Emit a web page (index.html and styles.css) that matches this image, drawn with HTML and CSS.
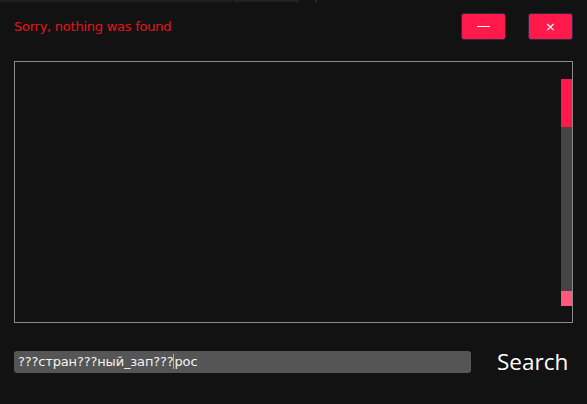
FILE: index.html
```html
<!DOCTYPE html>
<html>
<head>
<meta charset="utf-8">
<link rel="stylesheet" href="styles.css">
</head>
<body>
<div class="topstrip"><span class="seg a"></span><span class="seg b"></span><span class="seg c"></span></div>
<div class="header">
  <div class="title">Sorry, nothing was found</div>
  <div class="btns">
    <div class="btn"><span class="dash"></span></div>
    <div class="btn"><span class="x">×</span></div>
  </div>
</div>
<div class="listbox">
  <div class="scroll">
    <div class="thumb"></div>
    <div class="track"></div>
    <div class="endbtn"></div>
  </div>
</div>
<div class="footer">
  <div class="input">???стран???ный_зап???<span class="caret"></span>рос</div>
  <div class="search">Search</div>
</div>
</body>
</html>
```
FILE: styles.css
```css
html, body { margin: 0; padding: 0; }
body {
  width: 587px; height: 404px; overflow: hidden;
  background: #121212;
  font-family: "DejaVu Sans", sans-serif;
}
.topstrip { height: 3px; display: flex; }
.seg { height: 2px; background: #1f1f1f; }
.seg.a { width: 232px; }
.seg.b { width: 66px; margin-left: 1px; background: #222; }
.seg.c { width: 2px; margin-left: 16px; background: #2a2a2a; }
.header {
  display: flex; justify-content: space-between; align-items: flex-start;
  padding: 10px 14px 0 14px; height: 48px; box-sizing: border-box;
}
.title { color: #e8121e; font-size: 13px; margin-top: 6px; letter-spacing: -0.25px; }
.btns { display: flex; gap: 22px; }
.btn {
  width: 45px; height: 27px; box-sizing: border-box;
  background: #ff1a4b; border: 1px solid #2a2a48; border-radius: 3px;
  display: flex; align-items: center; justify-content: center;
}
.dash { width: 13px; height: 1px; background: #fff; }
.x { color: #fff; font-size: 13px; line-height: 1; font-family: "DejaVu Sans", sans-serif; }
.listbox {
  margin: 10px 14px 0 14px; height: 262px; box-sizing: border-box;
  border: 1px solid #8a8a8a;
  display: flex; justify-content: flex-end;
  padding: 17px 0 16px 0;
}
.scroll { width: 11px; display: flex; flex-direction: column; }
.thumb { height: 48px; background: #ff1a4b; }
.track { flex: 1; background: #454545; }
.endbtn { height: 15px; background: #ff5a7e; }
.footer {
  display: flex; align-items: center;
  padding: 0 0 0 14px; margin-top: 24px;
}
.input {
  width: 457px; height: 22px; box-sizing: border-box;
  background: #555555; border-radius: 3px;
  color: #f2f2f2; font-size: 13px; line-height: 22px; padding-left: 4px;
  font-family: "DejaVu Sans", sans-serif; letter-spacing: -0.15px;
}
.caret { display: inline-block; width: 1px; height: 15px; background: #d8b040; vertical-align: -3px; }
.search {
  margin-left: 26px; color: #fff; font-size: 22.5px; line-height: 30px;
  font-family: "Open Sans", sans-serif;
}
```
